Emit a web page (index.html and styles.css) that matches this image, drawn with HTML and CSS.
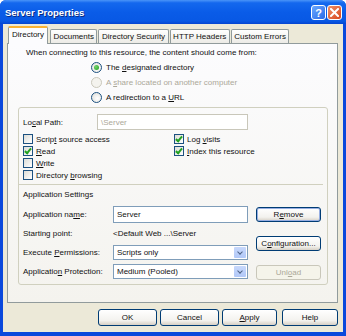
FILE: index.html
```html
<!DOCTYPE html>
<html lang="en">
<head>
    <meta charset="UTF-8">
    <title>Server Properties</title>
    <link rel="stylesheet" href="styles.css">
</head>
<body>
    <div class="window">
        <div class="titlebar">
            <span class="title">Server Properties</span>
            <div class="title-buttons">
                <span class="tbtn help">?</span>
                <span class="tbtn close">
                    <svg width="9" height="9" viewBox="0 0 9 9"><path d="M1 1 L8 8 M8 1 L1 8" stroke="#fff" stroke-width="2" stroke-linecap="square"/></svg>
                </span>
            </div>
        </div>

        <div class="client">
            <div class="tabs">
                <div class="tab active">Directory</div>
                <div class="tab">Documents</div>
                <div class="tab">Directory Security</div>
                <div class="tab">HTTP Headers</div>
                <div class="tab">Custom Errors</div>
            </div>

            <div class="panel">
                <p class="intro">When connecting to this resource, the content should come from:</p>
                <div class="radios">
                    <div class="radio checked"><span class="circle"></span><span>The <u>d</u>esignated directory</span></div>
                    <div class="radio disabled"><span class="circle"></span><span>A <u>s</u>hare located on another computer</span></div>
                    <div class="radio"><span class="circle"></span><span>A redirection to a <u>U</u>RL</span></div>
                </div>

                <div class="group">
                    <div class="path-row">
                        <span class="label">Lo<u>c</u>al Path:</span>
                        <div class="field disabled">\Server</div>
                    </div>

                    <div class="checks">
                        <div class="check"><span class="box"></span><span>Scrip<u>t</u> source access</span></div>
                        <div class="check"><span class="box on"></span><span>Lo<u>g</u> <u>v</u>isits</span></div>
                        <div class="check"><span class="box on"></span><span><u>R</u>ead</span></div>
                        <div class="check"><span class="box on"></span><span><u>I</u>ndex this resource</span></div>
                        <div class="check"><span class="box"></span><span><u>W</u>rite</span></div>
                        <div class="check"></div>
                        <div class="check"><span class="box"></span><span>Directory <u>b</u>rowsing</span></div>
                    </div>

                    <div class="separator"></div>
                    <div class="section-title">Application Settings</div>

                    <div class="app">
                        <div class="app-fields">
                            <div class="app-row">
                                <span class="label">Application na<u>m</u>e:</span>
                                <div class="field">Server</div>
                            </div>
                            <div class="app-row">
                                <span class="label">Starting point:</span>
                                <span class="value">&lt;Default Web ...\Server</span>
                            </div>
                            <div class="app-row">
                                <span class="label">Execute <u>P</u>ermissions:</span>
                                <div class="field select"><span>Scripts only</span><span class="drop"></span></div>
                            </div>
                            <div class="app-row">
                                <span class="label">Applicatio<u>n</u> Protection:</span>
                                <div class="field select"><span>Medium (Pooled)</span><span class="drop"></span></div>
                            </div>
                        </div>
                        <div class="app-buttons">
                            <button class="btn default">R<u>e</u>move</button>
                            <button class="btn">C<u>o</u>nfiguration...</button>
                            <button class="btn" disabled>Unl<u>o</u>ad</button>
                        </div>
                    </div>
                </div>
            </div>

            <div class="footer">
                <button class="btn ok">OK</button>
                <button class="btn cancel">Cancel</button>
                <button class="btn apply"><u>A</u>pply</button>
                <button class="btn help-btn">Help</button>
            </div>
        </div>
    </div>
</body>
</html>
```

FILE: styles.css
```css
body {
    margin: 0;
    padding: 0;
    font-family: "Liberation Sans", Arial, sans-serif;
    font-size: 8px;
    color: #111;
    background: #fff;
}

.window {
    width: 346px;
    height: 336px;
    display: flex;
    flex-direction: column;
    background: #0a48dc;
    border-radius: 6px 6px 0 0;
    overflow: hidden;
}

.titlebar {
    height: 24px;
    display: flex;
    align-items: center;
    justify-content: space-between;
    padding: 0 4px 0 5px;
    background: linear-gradient(to bottom, #4a94f8 0%, #1468ee 12%, #0a5ce8 50%, #0858e4 88%, #0444d0 100%);
}

.title {
    color: #fff;
    font-weight: bold;
    font-size: 9.5px;
    text-shadow: 1px 1px 0 #0a2a80;
}

.title-buttons {
    display: flex;
    gap: 1px;
    margin-top: 1px;
}

.tbtn {
    width: 15px;
    height: 15px;
    border: 1px solid #fff;
    border-radius: 3px;
    box-sizing: border-box;
    display: flex;
    align-items: center;
    justify-content: center;
    color: #fff;
    font-weight: bold;
    font-size: 11px;
}

.help {
    background: linear-gradient(135deg, #6aa8ff, #2a6ae8);
}

.close {
    background: linear-gradient(135deg, #ee9068, #d8461e);
}

.client {
    flex: 1;
    margin: 0 3px 4px 3px;
    background: #ece9d8;
    display: flex;
    flex-direction: column;
    padding: 2px 5px 0 4px;
}

.tabs {
    display: flex;
    align-items: flex-end;
    height: 17px;
    padding-left: 1px;
    gap: 1px;
    position: relative;
    z-index: 1;
}

.tab {
    height: 14px;
    padding: 0 2.5px;
    line-height: 14px;
    border: 1px solid #919b9c;
    border-bottom: none;
    border-radius: 2px 2px 0 0;
    background: linear-gradient(to bottom, #fff, #ecebe6);
    box-sizing: border-box;
}

.tab.active {
    height: 18px;
    margin-bottom: -1px;
    margin-right: 1px;
    padding: 0 3px;
    line-height: 13px;
    border-top: 2px solid #f9b234;
    background: #fcfcfe;
}

.panel {
    height: 260px;
    border: 1px solid #919b9c;
    background: linear-gradient(to bottom, #fcfcfe, #f4f3ee);
    box-sizing: border-box;
    padding: 3px 9px 0 10px;
}

.intro {
    margin: 0 0 0 8px;
    line-height: 11px;
}

.radios {
    margin: 2px 0 0 73px;
    display: flex;
    flex-direction: column;
}

.radio {
    height: 15px;
    display: flex;
    align-items: center;
}

.radio .circle {
    width: 9px;
    height: 9px;
    margin-right: 4px;
    border: 1px solid #1c5180;
    border-radius: 50%;
    background: radial-gradient(circle at 60% 60%, #fff, #dcdcd6);
    display: flex;
    align-items: center;
    justify-content: center;
}

.radio.checked .circle::after {
    content: "";
    width: 5px;
    height: 5px;
    border-radius: 50%;
    background: radial-gradient(circle at 35% 35%, #73d26b, #21a121);
}

.radio.disabled {
    color: #aca899;
}

.radio.disabled .circle {
    border-color: #cac8bb;
    background: #f4f3ee;
}

.group {
    margin-top: 2px;
    height: 178px;
    border: 1px solid #d0d0bf;
    border-radius: 3px;
    box-sizing: border-box;
    padding: 6px 4px 0 4px;
}

.path-row {
    display: flex;
    align-items: center;
    height: 16px;
}

.path-row .label {
    width: 74px;
}

.field {
    width: 151px;
    height: 16px;
    border: 1px solid #7f9db9;
    background: #fff;
    box-sizing: border-box;
    padding-left: 3px;
    display: flex;
    align-items: center;
    position: relative;
}

.field.disabled {
    border-color: #c9c7ba;
    color: #aca899;
}

.checks {
    margin-top: 3px;
    display: grid;
    grid-template-columns: 151px 1fr;
}

.check {
    height: 12px;
    display: flex;
    align-items: center;
}

.box {
    width: 10px;
    height: 10px;
    margin-right: 3px;
    border: 1px solid #1c5180;
    box-sizing: border-box;
    background: linear-gradient(135deg, #dcdcd6, #fff);
    position: relative;
}

.box.on::after {
    content: "";
    position: absolute;
    left: 2px;
    top: 0;
    width: 2px;
    height: 5px;
    border: solid #21a121;
    border-width: 0 2px 2px 0;
    transform: rotate(40deg);
}

.separator {
    margin: 3px 0 0 -5px;
    border-top: 1px solid #d0d0bf;
}

.section-title {
    margin-top: 4px;
    line-height: 11px;
}

.app {
    display: flex;
    margin-top: 6px;
}

.app-fields {
    display: flex;
    flex-direction: column;
    gap: 2px;
}

.app-row {
    display: flex;
    align-items: center;
    height: 17px;
}

.app-row .label {
    width: 90px;
}

.app-row .field {
    width: 135px;
    height: 17px;
}

.app-row .select {
    height: 15px;
}

.drop {
    position: absolute;
    right: 1px;
    top: 1px;
    bottom: 1px;
    width: 12px;
    border-radius: 1px;
    background: linear-gradient(to bottom, #c7d8fb, #b1c8f8);
}

.drop::after {
    content: "";
    position: absolute;
    left: 4px;
    top: 3px;
    width: 3px;
    height: 3px;
    border: solid #4d6185;
    border-width: 0 1.5px 1.5px 0;
    transform: rotate(45deg);
}

.app-buttons {
    margin-left: 8px;
    display: flex;
    flex-direction: column;
    gap: 14px;
    padding-top: 1px;
}

.btn {
    width: 65px;
    height: 15px;
    padding: 0;
    font-family: inherit;
    font-size: 8px;
    color: #111;
    border: 1px solid #003c74;
    border-radius: 3px;
    background: linear-gradient(to bottom, #fff, #f3f2ee 70%, #d6d0c5);
}

.btn.default {
    box-shadow: inset 0 0 0 1px #97aee2;
}

.btn:disabled {
    color: #aca899;
    border-color: #c9c7ba;
    background: #f5f4ea;
}

.footer {
    display: flex;
    justify-content: flex-end;
    align-items: center;
    gap: 3px;
    height: 28px;
    padding-bottom: 1px;
}

.footer .btn {
    height: 17px;
}

.ok,
.cancel {
    width: 59px;
}

.apply {
    width: 55px;
    margin-right: 2px;
}

.help-btn {
    width: 56px;
}
```
